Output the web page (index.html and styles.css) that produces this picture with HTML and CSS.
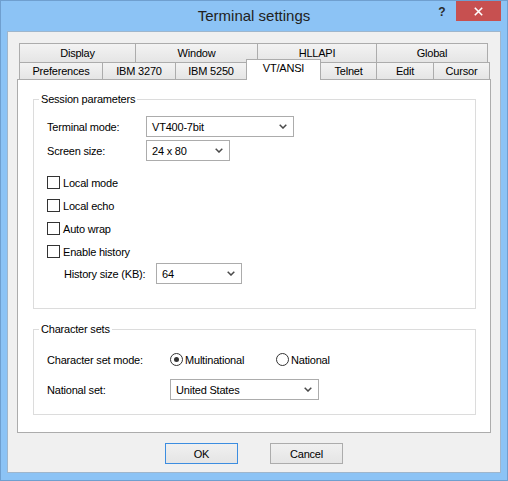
FILE: index.html
```html
<!DOCTYPE html>
<html>
<head>
<meta charset="utf-8">
<link rel="stylesheet" href="styles.css">
</head>
<body>
<div class="window">
  <div class="titlebar">
    <div class="tb-spacer"></div>
    <div class="title">Terminal settings</div>
    <div class="tb-controls">
      <div class="help">?</div>
      <div class="close">
        <svg width="9" height="9" viewBox="0 0 9 9"><path d="M0.8 0.8 L8.2 8.2 M8.2 0.8 L0.8 8.2" stroke="#fff" stroke-width="1.6" fill="none"/></svg>
      </div>
    </div>
  </div>
  <div class="client">
    <div class="tabs row1">
      <div class="tab first">Display</div>
      <div class="tab">Window</div>
      <div class="tab">HLLAPI</div>
      <div class="tab">Global</div>
    </div>
    <div class="tabs row2">
      <div class="tab first">Preferences</div>
      <div class="tab">IBM 3270</div>
      <div class="tab">IBM 5250</div>
      <div class="tab active">VT/ANSI</div>
      <div class="tab">Telnet</div>
      <div class="tab">Edit</div>
      <div class="tab">Cursor</div>
    </div>
    <div class="panel">
      <fieldset class="group">
        <legend>Session parameters</legend>
        <div class="group-body session">
          <div class="field">
            <span class="label">Terminal mode:</span>
            <div class="combo w-term"><span>VT400-7bit</span><svg class="chev" width="8" height="5" viewBox="0 0 8 5"><path d="M0.7 0.7 L4 4 L7.3 0.7" stroke="#4a4a4a" stroke-width="1.5" fill="none"/></svg></div>
          </div>
          <div class="field gap3">
            <span class="label">Screen size:</span>
            <div class="combo w-screen"><span>24 x 80</span><svg class="chev" width="8" height="5" viewBox="0 0 8 5"><path d="M0.7 0.7 L4 4 L7.3 0.7" stroke="#4a4a4a" stroke-width="1.5" fill="none"/></svg></div>
          </div>
          <div class="checks">
            <div class="check"><span class="box"></span><span>Local mode</span></div>
            <div class="check"><span class="box"></span><span>Local echo</span></div>
            <div class="check"><span class="box"></span><span>Auto wrap</span></div>
            <div class="check"><span class="box"></span><span>Enable history</span></div>
          </div>
          <div class="field history">
            <span class="label hist-label">History size (KB):</span>
            <div class="combo w-hist"><span>64</span><svg class="chev" width="8" height="5" viewBox="0 0 8 5"><path d="M0.7 0.7 L4 4 L7.3 0.7" stroke="#4a4a4a" stroke-width="1.5" fill="none"/></svg></div>
          </div>
        </div>
      </fieldset>
      <fieldset class="group charsets">
        <legend>Character sets</legend>
        <div class="group-body chars">
          <div class="field">
            <span class="label wide">Character set mode:</span>
            <div class="radio"><span class="circle checked"></span><span>Multinational</span></div>
            <div class="radio"><span class="circle"></span><span>National</span></div>
          </div>
          <div class="field gap9">
            <span class="label wide">National set:</span>
            <div class="combo w-nat"><span>United States</span><svg class="chev" width="8" height="5" viewBox="0 0 8 5"><path d="M0.7 0.7 L4 4 L7.3 0.7" stroke="#4a4a4a" stroke-width="1.5" fill="none"/></svg></div>
          </div>
        </div>
      </fieldset>
    </div>
    <div class="buttons">
      <button class="btn default">OK</button>
      <button class="btn">Cancel</button>
    </div>
  </div>
</div>
</body>
</html>
```
FILE: styles.css
```css
body {
  margin: 0;
}

.window {
  width: 508px;
  height: 481px;
  box-sizing: border-box;
  border: 1px solid #6f9fcf;
  background: #8cc3f5;
  display: flex;
  flex-direction: column;
  font-family: "Liberation Sans", Arial, sans-serif;
}

.titlebar {
  height: 30px;
  flex-shrink: 0;
  display: flex;
}

.tb-spacer {
  width: 75px;
}

.title {
  flex: 1;
  text-align: center;
  font-size: 15px;
  line-height: 30px;
  color: #222;
}

.tb-controls {
  width: 75px;
  display: flex;
  align-items: flex-start;
}

.help {
  width: 20px;
  margin-right: 4px;
  line-height: 23px;
  text-align: center;
  font-weight: bold;
  font-size: 12px;
  color: #2a2a2a;
}

.close {
  width: 45px;
  height: 20px;
  background: #c75050;
  display: flex;
  align-items: center;
  justify-content: center;
}

.client {
  flex: 1;
  margin: 0 6px 7px;
  border: 1px solid #9fb6cc;
  background: #f0f0f0;
  padding: 11px 9px 8px;
  display: flex;
  flex-direction: column;
  font-size: 11px;
  letter-spacing: -0.2px;
  color: #000;
}

.tabs {
  display: grid;
  margin-left: 2px;
  flex-shrink: 0;
}

.row1 {
  grid-template-columns: 117px 122px 119px 111px;
  height: 19px;
}

.row2 {
  grid-template-columns: 84px 73px 71px 74px 56px 57px 56px;
  height: 17px;
}

.tab {
  border-top: 1px solid #acacac;
  border-right: 1px solid #acacac;
  background: linear-gradient(#f3f3f3, #e5e5e5);
  text-align: center;
  white-space: nowrap;
}

.tab.first {
  border-left: 1px solid #acacac;
}

.row1 .tab {
  line-height: 18px;
}

.row2 .tab {
  line-height: 16px;
}

.row2 .tab.active {
  align-self: start;
  background: #fff;
  border-left: 1px solid #acacac;
  margin: -3px 0 -1px -1px;
  height: 20px;
  line-height: 17px;
  position: relative;
  z-index: 1;
}

.panel {
  height: 354px;
  flex-shrink: 0;
  box-sizing: border-box;
  border: 1px solid #acacac;
  background: #fff;
  padding: 12px 14px 0 15px;
}

.group {
  margin: 0;
  padding: 0;
  border: 1px solid #dcdcdc;
  min-width: 0;
}

.group legend {
  margin-left: 5px;
  padding: 0 2px;
  line-height: 14px;
}

.charsets {
  margin-top: 13px;
}

.group-body {
  display: flex;
  flex-direction: column;
}

.session {
  padding: 10px 0 24px 13px;
}

.chars {
  padding: 13px 0 14px 13px;
}

.field {
  display: flex;
  align-items: center;
  height: 21px;
}

.gap3 {
  margin-top: 3px;
}

.gap9 {
  margin-top: 9px;
}

.label {
  width: 99px;
  flex-shrink: 0;
  white-space: nowrap;
}

.label.wide {
  width: 123px;
}

.history {
  margin-top: 5px;
  padding-left: 17px;
}

.hist-label {
  width: 92px;
}

.combo {
  box-sizing: border-box;
  height: 21px;
  border: 1px solid #acacac;
  background: #fff;
  display: flex;
  align-items: center;
  justify-content: space-between;
  padding: 0 6px 0 5px;
  white-space: nowrap;
}

.w-term {
  width: 148px;
}

.w-screen {
  width: 84px;
}

.w-hist {
  width: 86px;
}

.w-nat {
  width: 149px;
}

.checks {
  margin-top: 15px;
  display: flex;
  flex-direction: column;
  gap: 10px;
}

.check {
  display: flex;
  align-items: center;
  height: 13px;
}

.box {
  width: 11px;
  height: 11px;
  border: 1px solid #333;
  background: #fff;
  margin-right: 3px;
}

.radio {
  display: flex;
  align-items: center;
  width: 106px;
}

.circle {
  width: 11px;
  height: 11px;
  border: 1px solid #333;
  border-radius: 50%;
  background: #fff;
  margin-right: 2px;
  display: flex;
  align-items: center;
  justify-content: center;
}

.circle.checked::after {
  content: "";
  width: 5px;
  height: 5px;
  border-radius: 50%;
  background: #333;
}

.buttons {
  flex-shrink: 0;
  display: flex;
  justify-content: center;
  gap: 32px;
  margin-top: 10px;
}

.btn {
  width: 73px;
  height: 21px;
  box-sizing: border-box;
  border: 1px solid #acacac;
  background: linear-gradient(#f0f0f0, #e5e5e5);
  font-family: inherit;
  font-size: 11px;
  letter-spacing: -0.2px;
  color: #000;
  padding: 0;
}

.btn.default {
  border-color: #3c8de0;
}
```
